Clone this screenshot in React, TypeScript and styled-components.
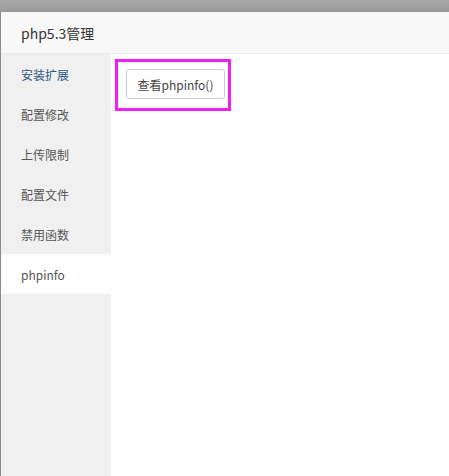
import React from "react";
import styled, { createGlobalStyle } from "styled-components";

const Global = createGlobalStyle`
  html, body { margin: 0; padding: 0; }
  body {
    width: 449px;
    height: 476px;
    overflow: hidden;
    background: #8c8c8c;
    font-family: "Microsoft YaHei", "Noto Sans CJK SC", sans-serif;
  }
`;

const Screen = styled.div`
  display: flex;
  flex-direction: column;
  width: 449px;
  height: 476px;
`;

const Backdrop = styled.div`
  height: 12px;
  flex: none;
  background: linear-gradient(#a8a8a8, #9a9a9a);
`;

const Dialog = styled.div`
  flex: 1;
  margin-left: 1px;
  display: flex;
  flex-direction: column;
  background: #fff;
  min-height: 0;
`;

const Header = styled.div`
  height: 41px;
  flex: none;
  display: flex;
  align-items: center;
  padding-left: 20px;
  background: #f8f8f8;
  border-bottom: 1px solid #eaeaea;
  color: #333;
  font-size: 14px;
`;

const Body = styled.div`
  flex: 1;
  display: flex;
  min-height: 0;
`;

const Sidebar = styled.div`
  width: 110px;
  flex: none;
  background: #f0f0f0;
  display: flex;
  flex-direction: column;
`;

const NavItem = styled.div<{ $active?: boolean; $current?: boolean }>`
  height: 40px;
  display: flex;
  align-items: center;
  padding-left: 20px;
  font-size: 12px;
  color: ${(p) => (p.$current ? "#2b5788" : "#555")};
  background: ${(p) => (p.$active ? "#fff" : "transparent")};
`;

const Content = styled.div`
  flex: 1;
  padding: 5px 4px;
  display: flex;
  align-items: flex-start;
`;

const Highlight = styled.div`
  border: 3px solid #f21ff2;
  padding: 7px 3px 9px 8px;
  display: flex;
`;

const Button = styled.button`
  height: 30px;
  width: 99px;
  padding: 0;
  border: 1px solid #cfcfcf;
  border-radius: 3px;
  background: #fff;
  color: #444;
  font-family: inherit;
  font-size: 12px;
  display: flex;
  align-items: center;
  justify-content: center;
`;

const items = ["安装扩展", "配置修改", "上传限制", "配置文件", "禁用函数", "phpinfo"];

export default function App() {
  return (
    <Screen>
      <Global />
      <Backdrop />
      <Dialog>
        <Header>php5.3管理</Header>
        <Body>
          <Sidebar>
            {items.map((t, i) => (
              <NavItem key={t} $current={i === 0} $active={i === 5}>
                {t}
              </NavItem>
            ))}
          </Sidebar>
          <Content>
            <Highlight>
              <Button>查看phpinfo()</Button>
            </Highlight>
          </Content>
        </Body>
      </Dialog>
    </Screen>
  );
}
